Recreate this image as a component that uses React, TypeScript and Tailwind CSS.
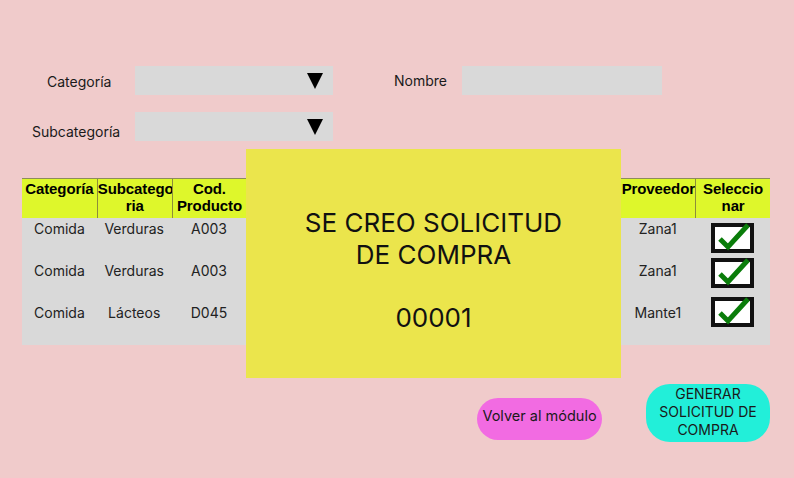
import React from "react";

type Row = {
  cells: string[];
  h: number;
  pt: number;
  boxTop: number;
};

const HEADERS = [
  "Categoría",
  "Subcatego\nria",
  "Cod.\nProducto",
  "Nombre",
  "Marca",
  "Cantidad",
  "Unidad",
  "Precio",
  "Proveedor",
  "Seleccio\nnar",
];

const ROWS: Row[] = [
  { cells: ["Comida", "Verduras", "A003", "", "", "", "", "", "Zana1"], h: 38, pt: 2, boxTop: 5 },
  { cells: ["Comida", "Verduras", "A003", "", "", "", "", "", "Zana1"], h: 38, pt: 6, boxTop: 2 },
  { cells: ["Comida", "Lácteos", "D045", "", "", "", "", "", "Mante1"], h: 51, pt: 10, boxTop: 3 },
];

function Checked() {
  return (
    <div className="relative h-[30px] w-[43px] border-[4px] border-[#111] bg-white">
      <svg viewBox="0 0 35 22" className="absolute left-0 top-0 h-[22px] w-[35px] overflow-visible">
        <path d="M5 12 L13 20 L33 -2" fill="none" stroke="#0a7d0a" strokeWidth="5" strokeLinejoin="miter" />
      </svg>
    </div>
  );
}

function Select() {
  return (
    <div className="relative h-[29px] w-[198px] bg-[#d9d9d9]">
      <span className="absolute right-[10px] top-[7px] h-0 w-0 border-x-[8px] border-t-[16px] border-x-transparent border-t-black" />
    </div>
  );
}

export default function App() {
  return (
    <div
      className="relative h-[478px] w-[794px] overflow-hidden bg-[#f0cbcb] pt-[66px] text-[#1a1a1a]"
      style={{ fontFamily: "Inter, 'Noto Sans', sans-serif" }}
    >
      {/* filtros */}
      <div className="flex h-[29px] items-center text-[14px]">
        <span className="ml-[47px] w-[88px] pt-[2px]">Categoría</span>
        <Select />
        <span className="ml-[61px] w-[68px]">Nombre</span>
        <div className="h-[29px] w-[200px] bg-[#d9d9d9]" />
      </div>
      <div className="mt-[17px] flex h-[29px] items-center text-[14px]">
        <span className="ml-[32px] w-[103px] pt-[10px]">Subcategoría</span>
        <Select />
      </div>

      {/* tabla */}
      <div className="ml-[22px] mt-[37px] w-[748px]">
        <div
          className="grid h-[40px] grid-cols-10 border-t border-[#8d8d5a] bg-[#def72b] text-[15px] font-bold leading-[17px] tracking-[-0.1px] text-black"
          style={{ fontFamily: "'Liberation Sans', Arial, sans-serif" }}
        >
          {HEADERS.map((h, i) => (
            <div
              key={h}
              className={`overflow-hidden whitespace-pre-line pt-[1px] text-center ${i > 0 ? "border-l border-[#8d8d3a]" : ""}`}
            >
              {h}
            </div>
          ))}
        </div>
        <div className="bg-[#d9d9d9] text-[14px] leading-[17px] text-[#222]">
          {ROWS.map((r, ri) => (
            <div key={ri} className="grid grid-cols-10" style={{ height: r.h }}>
              {r.cells.map((c, ci) => (
                <div key={ci} className="text-center" style={{ paddingTop: r.pt }}>
                  {c}
                </div>
              ))}
              <div className="flex justify-center" style={{ paddingTop: r.boxTop }}>
                <Checked />
              </div>
            </div>
          ))}
        </div>
      </div>

      {/* botones */}
      <div className="mt-[39px] flex items-start text-[14px]">
        <button className="ml-[477px] mt-[14px] h-[42px] w-[125px] rounded-full bg-[#f26be2] pb-[6px] text-[14.5px] text-[#1a1a1a]">
          Volver al módulo
        </button>
        <button className="ml-[44px] h-[58px] w-[124px] rounded-[24px] bg-[#22efd9] pb-[3px] text-[14px] leading-[18px] text-[#1a1a1a]">
          GENERAR
          <br />
          SOLICITUD DE
          <br />
          COMPRA
        </button>
      </div>

      {/* mensaje */}
      <div className="absolute left-[246px] top-[149px] flex h-[229px] w-[375px] flex-col items-center bg-[#ebe54c] pt-[58px] text-center text-[26px] leading-[32px] text-[#111]">
        <p>
          SE CREO SOLICITUD
          <br />
          DE COMPRA
        </p>
        <p className="mt-[31px]">00001</p>
      </div>
    </div>
  );
}
